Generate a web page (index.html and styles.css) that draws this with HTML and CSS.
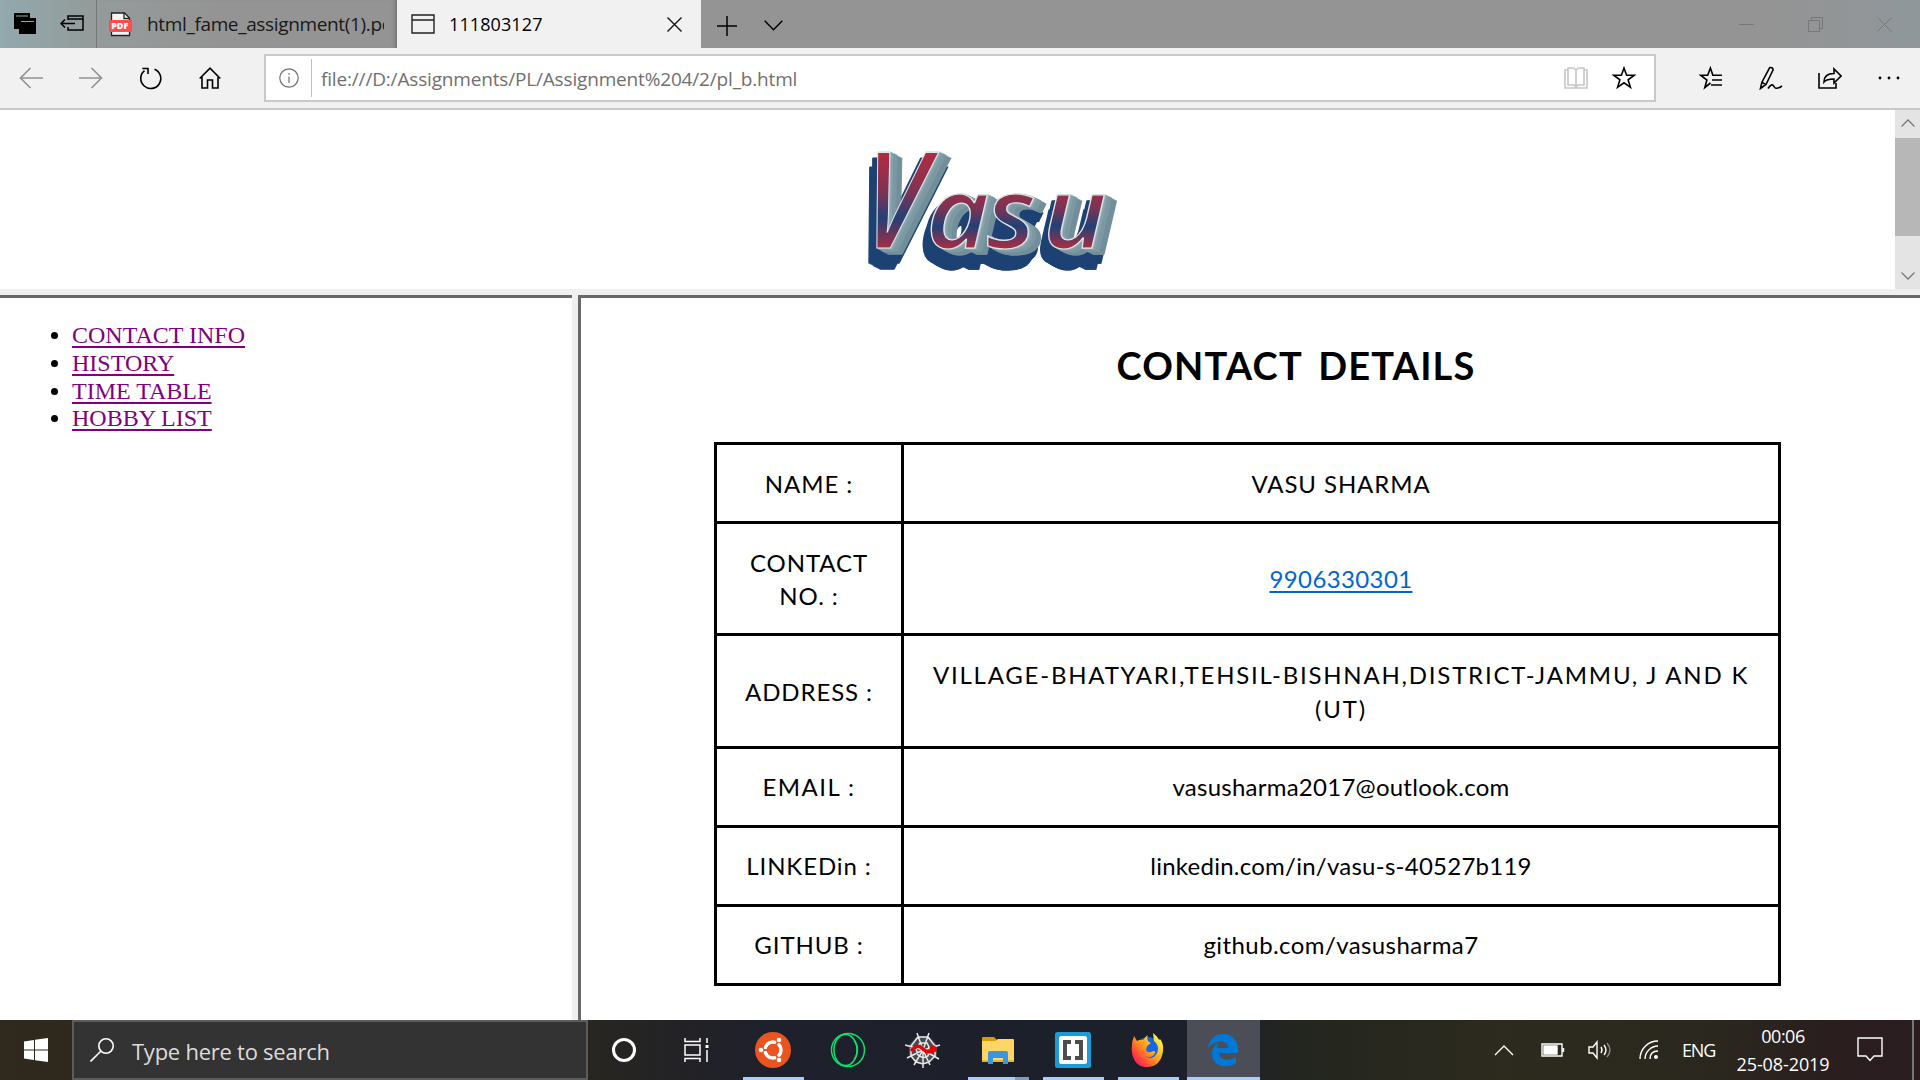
FILE: index.html
```html
<!DOCTYPE html>
<html lang="en">
<head>
<meta charset="utf-8">
<title>111803127</title>
<link rel="stylesheet" href="styles.css">
</head>
<body>
<div class="screen">
  <header class="tabbar">
    <div class="tab-tools">
      <svg width="22" height="22" viewBox="0 0 22 22"><path d="M0 0h16v5h6v16H5v-5H0z"/><path d="M2 3h12M7 8.500h13" stroke="#9aa9ad" stroke-width="1.200"/></svg>
      <svg width="24" height="18" viewBox="0 0 24 18" fill="none" stroke="#000" stroke-width="1.500"><path d="M8 5V1h15v14H8v-3M8 4h15M1 8.500h14M5 4.500L1 8.500l4 4"/></svg>
    </div>
    <div class="tab">
      <svg width="24" height="25" viewBox="0 0 24 25"><path d="M2.500 1h13l5 5v17.500h-18z" fill="#f7f7f7" stroke="#222" stroke-width="1.300"/><path d="M15 1v5.500h5.500" fill="none" stroke="#222" stroke-width="1.300"/><rect y="8" width="23" height="12" fill="#ff4d4d"/><text x="2.200" y="17" class="pdf-mark">PDF</text></svg>
      <span class="tab-title">html_fame_assignment(1).pdf</span>
    </div>
    <div class="tab tab-active">
      <svg width="24" height="20" viewBox="0 0 24 20" fill="none" stroke="#222" stroke-width="1.400"><path d="M1 1h22v18H1zM1 6h22"/></svg>
      <span class="tab-title active-title">111803127</span>
      <svg width="15" height="15" viewBox="0 0 15 15" fill="none" stroke="#111" stroke-width="1.400"><path d="M.5.500l14 14M14.500.5l-14 14"/></svg>
    </div>
    <div class="tab-actions">
      <svg width="20" height="20" viewBox="0 0 20 20" fill="none" stroke="#000" stroke-width="1.500"><path d="M10 0v20M0 10h20"/></svg>
      <svg width="19" height="11" viewBox="0 0 19 11" fill="none" stroke="#000" stroke-width="1.500"><path d="M.7.700l8.800 9 8.800-9"/></svg>
    </div>
    <div class="window-buttons">
      <svg width="15" height="15" viewBox="0 0 15 15"><path d="M0 7.500h15"/></svg>
      <svg width="15" height="15" viewBox="0 0 15 15"><path d="M.5 3.500h11v11H.500zM3.500 3V.500h11v11H12"/></svg>
      <svg width="15" height="15" viewBox="0 0 15 15"><path d="M.5.500l14 14M14.500.5l-14 14"/></svg>
    </div>
  </header>

  <div class="toolbar">
    <div class="nav-buttons">
      <svg class="muted" width="24" height="22" viewBox="0 0 24 22"><path d="M24 11H1M11.500 1L1.500 11l10 10"/></svg>
      <svg class="muted" width="24" height="22" viewBox="0 0 24 22"><path d="M0 11h23M12.500 1l10 10-10 10"/></svg>
      <svg width="24" height="24" viewBox="0 0 24 24"><path d="M15.500 3.200A10 10 0 1 1 5.500 4.700M3.300 2.500H9V8"/></svg>
      <svg width="22" height="22" viewBox="0 0 22 22"><path d="M.7 11.500L11 1.200l10.300 10.300M3 10v11h5.500v-8h5v8H19V10"/></svg>
    </div>
    <div class="address">
      <svg class="info" width="20" height="20" viewBox="0 0 20 20"><circle cx="10" cy="10" r="9.200"/><path d="M10 8.500V15M10 5v1.800"/></svg>
      <span class="url">file:///D:/Assignments/PL/Assignment%204/2/pl_b.html</span>
      <svg class="book" width="24" height="22" viewBox="0 0 24 22"><path d="M4 3H1v18h22V3h-3M12 3v17M4 1h6l2 2 2-2h6v17h-6l-2 2-2-2H4z"/></svg>
      <svg width="24" height="24" viewBox="0 0 24 24"><path d="M12 2l2.600 7.200h7.700l-6.200 4.600 2.300 7.500L12 16.800l-6.400 4.500 2.300-7.500-6.200-4.600h7.700z"/></svg>
    </div>
    <div class="tool-actions">
      <svg width="24" height="24" viewBox="0 0 24 24"><path d="M11.500 17l-5.700 4.500 2.100-7.500-6.200-4.800h7L11.400 2l2.500 7.200H23M13 14h10M12 19h11"/></svg>
      <svg width="24" height="24" viewBox="0 0 24 24"><path d="M1.500 22.500l1.300-6L10 2.800q1-2 2.800-1t1 2.700L7 18.500zM3 16.500L7 18.500M9 22.500c3-5 5-4 6-2s2.500 3 8-.5"/></svg>
      <svg width="24" height="22" viewBox="0 0 24 22"><path d="M1 6v15h17v-5M6 15c0-6 4-8.500 10-8.500V2l7 7-7 7v-4c-5 0-8 .5-10 3z"/></svg>
      <svg width="22" height="4" viewBox="0 0 22 4"><g class="dots"><circle cx="2" cy="2" r="1.400"/><circle cx="11" cy="2" r="1.400"/><circle cx="20" cy="2" r="1.400"/></g></svg>
    </div>
  </div>

  <section class="banner">
    <div class="banner-page">
      <svg class="wordmark" width="290" height="150" viewBox="0 0 290 150">
        <defs>
          <linearGradient id="face" x1="0" y1="0" x2="0" y2="1">
            <stop offset="0.200" stop-color="#c1293b"/><stop offset="0.480" stop-color="#7d3354"/><stop offset="0.620" stop-color="#234076"/><stop offset="0.800" stop-color="#b52b3e"/>
          </linearGradient>
        </defs>
        <g class="wordmark-text">
          <text class="wordmark-cap" y="108" transform="translate(10 0) skewX(-5) scale(0.800 1)">V</text>
          <text y="108" transform="scale(1.120 1)" x="60 114 164">asu</text>
        </g>
      </svg>
    </div>
    <div class="scrollbar">
      <svg width="14" height="8" viewBox="0 0 14 8"><path d="M.5 7.500L7 1l6.500 6.500"/></svg>
      <div class="thumb"></div>
      <svg width="14" height="8" viewBox="0 0 14 8"><path d="M.5.500L7 7 13.500.500"/></svg>
    </div>
  </section>

  <main class="frames">
    <nav class="menu-frame">
      <ul class="menu">
        <li><a>CONTACT INFO</a></li>
        <li><a>HISTORY</a></li>
        <li><a>TIME TABLE</a></li>
        <li><a>HOBBY LIST</a></li>
      </ul>
    </nav>
    <div class="divider"></div>
    <section class="content-frame">
      <h1 class="heading">CONTACT DETAILS</h1>
      <table class="details">
        <tr class="row"><td class="key">NAME :</td><td><span class="caps">VASU SHARMA</span></td></tr>
        <tr class="row row-tall"><td class="key">CONTACT<br>NO. :</td><td><a class="phone">9906330301</a></td></tr>
        <tr class="row row-taller"><td class="key">ADDRESS :</td><td><span class="address-text">VILLAGE-BHATYARI,TEHSIL-BISHNAH,DISTRICT-JAMMU, J AND K<br>(UT)</span></td></tr>
        <tr class="row row-online"><td class="key key-email">EMAIL :</td><td>vasusharma2017@outlook.com</td></tr>
        <tr class="row row-online"><td class="key">LINKEDin :</td><td>linkedin.com/in/vasu-s-40527b119</td></tr>
        <tr class="row row-online"><td class="key">GITHUB :</td><td><span class="host">github.com/vasusharma7</span></td></tr>
      </table>
    </section>
  </main>

  <footer class="taskbar">
    <div class="start"><svg width="24" height="24" viewBox="0 0 24 24" fill="#fff"><path d="M0 3.400L10 2v9.500H0zM11 1.800L24 0v11.500H11zM0 12.500h10V22L0 20.600zM11 12.500h13V24l-13-1.800z"/></svg></div>
    <div class="search">
      <svg width="24" height="24" viewBox="0 0 24 24" fill="none" stroke="#fff" stroke-width="1.600"><circle cx="16" cy="8" r="7.200"/><path d="M11 13L.5 23.500"/></svg>
      <span>Type here to search</span>
    </div>
    <div class="apps">
      <div class="app"><svg width="26" height="26" viewBox="0 0 26 26"><circle cx="13" cy="13" r="10.500" fill="none" stroke="#fff" stroke-width="3"/></svg></div>
      <div class="app task-view"><svg width="26" height="24" viewBox="0 0 26 24" fill="none" stroke="#fff" stroke-width="1.500"><path d="M1 0v3.500h15V0M1 24v-3.500h15V24M1 7h15v10H1zM23 0v5M23 12v12"/><path d="M21.500 7h3v3h-3z" fill="#fff" stroke="none"/></svg></div>
      <div class="app running"><svg width="36" height="36" viewBox="0 0 36 36"><circle cx="18" cy="18" r="18" fill="#e95420"/><circle cx="18" cy="18" r="8" fill="none" stroke="#fff" stroke-width="3.500"/><path d="M18 18L5 18M18 18l6-10.500M18 18l6 10.500" stroke="#e95420" stroke-width="1.800"/><circle cx="18" cy="18" r="6" fill="#e95420"/><g fill="#fff" stroke="#e95420" stroke-width="1"><circle cx="6" cy="18" r="2.800"/><circle cx="24" cy="8" r="2.800"/><circle cx="24" cy="28" r="2.800"/></g></svg></div>
      <div class="app"><svg width="36" height="36" viewBox="0 0 36 36" fill="none" stroke="#0ee06e" stroke-width="1.500"><circle cx="18" cy="18" r="16.500"/><ellipse cx="15.500" cy="18" rx="11.500" ry="15.500"/><path d="M24 9c4.500 4 4.500 14 0 18"/></svg></div>
      <div class="app"><svg width="36" height="36" viewBox="0 0 36 36"><path d="M12 4l12 0 8 9 0 10-7 6-7 3-8-3-6-6 0-10z" fill="#484b50"/><path d="M18 18L12 1M18 18L24 1M18 18L35 13M18 18l16 9M18 18l7 15M18 18v18M18 18L9 33M18 18L2 26M18 18L0 13M13 5h10l7 9 0 10-6 6-6 2-7-2-5-6V14zM15 11h7l3 6-2 7-5 2-5-3-2-6z" fill="none" stroke="#e8e8e8" stroke-width="1.500"/><path d="M6 19c6-6 8-6 12-2s8 4 10-1" fill="none" stroke="#e90000" stroke-width="3.500"/><circle cx="28" cy="17" r="3.500" fill="#e90000"/></svg></div>
      <div class="app running grouped"><svg width="32" height="27" viewBox="0 0 32 27"><path d="M0 1q0-1 1-1h11l3 3-3 4H0z" fill="#d99a00"/><path d="M0 4h13l3-2h15q1 0 1 1v22H0z" fill="#ffd666"/><path d="M0 23h32v2H0z" fill="#e8b53c"/><path d="M6 27V16q0-2 2-2h16q2 0 2 2v11h-5v-6H11v6z" fill="#3a96dd"/></svg></div>
      <div class="app running"><svg width="36" height="36" viewBox="0 0 36 36"><rect width="36" height="36" rx="2.500" fill="#1d9bd6"/><rect x="4" y="4" width="28" height="28" rx="2.500" fill="#fff"/><path d="M8 8h8v4h-4v12h4v4H8zM28 8h-8v4h4v12h-4v4h8z" fill="#4d4d4d"/></svg></div>
      <div class="app running"><svg width="34" height="34" viewBox="0 0 34 34"><defs><linearGradient id="fox" x1="1" y1="0" x2="0" y2="1"><stop offset=".15" stop-color="#fff04a"/><stop offset=".5" stop-color="#ff9a1a"/><stop offset=".8" stop-color="#ff3147"/><stop offset="1" stop-color="#e31587"/></linearGradient></defs><circle cx="17" cy="16" r="12" fill="#1466e8"/><path d="M3 3l3 5q3-2 6-1 3-4 5-5-2 4 1 7l2 1-4 3-1 4q2 4 7 1 3 0 2 2-3 6-10 3 8 5 12-3 3-7-3-12l-1-8q5 4 6 7l1-1q4 5 3 12-2 15-15 16T1 20Q0 10 3 3z" fill="url(#fox)"/></svg></div>
      <div class="app running current"><svg width="32" height="34" viewBox="0 0 32 34"><path d="M1 15C3 5 9 1 16 1c10 0 15 7 15 16v3H12c0 7 10 9 17 4v6c-9 6-24 4-24-9 0-6 3-9 7-11-1 1-2 3-2 5h11c0-8-12-9-20 0z" fill="#0078d7"/></svg></div>
    </div>
    <div class="tray">
      <svg width="20" height="12" viewBox="0 0 20 12"><path d="M1 11l9-9 9 9"/></svg>
      <svg width="24" height="14" viewBox="0 0 24 14"><path d="M1 1h20v12H1zM22.500 5v4"/><path d="M3 3h13v8H3z" fill="#fff"/></svg>
      <svg width="24" height="20" viewBox="0 0 24 20"><path d="M1 7h4l4-5v16l-4-5H1zM13 7q2 3 0 6M16 5q4 5 0 10"/><path d="M19 3q6 7 0 14" opacity=".45"/></svg>
      <svg width="20" height="20" viewBox="0 0 20 20"><path d="M1 19C1 9 9 1 19 1M6 19C6 12 12 6 19 6M11 19c0-5 3-8 8-8"/><circle cx="17" cy="17" r="1.300" fill="#fff"/></svg>
      <span class="lang">ENG</span>
      <div class="clock"><span class="time">00:06</span><span>25-08-2019</span></div>
      <svg width="26" height="26" viewBox="0 0 26 26"><path d="M1 1h24v18h-8l-4 4.500L9 19H1z"/></svg>
      <div class="show-desktop"></div>
    </div>
  </footer>
</div>
</body>
</html>
```
FILE: styles.css
```css
* { box-sizing: border-box; }
body { margin: 0; font-family: "Open Sans", sans-serif; color: #000; background: #fff; }
svg { display: block; flex: none; }
.screen { width: 1920px; height: 1080px; display: flex; flex-direction: column; overflow: hidden; }

/* Tab strip */
.tabbar { height: 48px; flex: none; display: flex; align-items: stretch; background: linear-gradient(90deg, #92a9ae 0, #949b9b 90px, #949494 220px, #949494 1780px, #8f979b 1920px); }
.tab-tools { width: 97px; display: flex; align-items: center; gap: 24px; padding-left: 14px; border-right: 1px solid #777; }
.tab { width: 300px; display: flex; align-items: center; padding: 0 13px 0 12px; }
.tab-title { margin-left: 14px; flex: 1; overflow: hidden; white-space: nowrap; font-size: 19px; letter-spacing: -0.350px; }
.tab:not(.tab-active) { box-shadow: inset -5px 0 5px -4px #666; }
.tab:not(.tab-active) .tab-title { color: #191919; }
.pdf-mark { font: 800 9px "Open Sans", sans-serif; fill: #fff; }
.tab-active { width: 304px; padding: 0 19px 0 14px; background: #f1f1f1; }
.active-title { font-size: 18px; letter-spacing: 0.100px; }
.tab-actions { display: flex; align-items: center; gap: 27px; padding: 3px 0 0 16px; }
.window-buttons { margin-left: auto; display: flex; align-items: center; gap: 54px; padding-right: 28px; fill: none; stroke: #777; }

/* Toolbar */
.toolbar { height: 62px; flex: none; display: flex; align-items: center; background: #f1f1f1; border-bottom: 2px solid #c9c9c9; fill: none; stroke: #000; stroke-width: 1.600; }
.nav-buttons { width: 264px; display: flex; align-items: center; gap: 36px; padding-left: 19px; }
.muted { stroke: #929292; }
.address { width: 1392px; height: 48px; display: flex; align-items: center; padding: 0 18px 0 13px; background: #fff; border: 2px solid #c9c9c9; }
.info { stroke: #6f6f6f; stroke-width: 1.200; }
.url { height: 38px; margin-left: 12px; padding-left: 9px; flex: 1; border-left: 1px solid #c0c0c0; font-size: 19px; line-height: 40px; letter-spacing: -0.170px; color: #707070; }
.book { stroke: #c6c6c6; margin-right: 24px; }
.tool-actions { display: flex; align-items: center; gap: 35.500px; padding-left: 43px; }
.dots { fill: #000; stroke: none; }

/* Banner frame */
.banner { height: 188px; flex: none; display: flex; border-bottom: 3px solid #686a69; }
.banner-page { flex: 1; display: flex; padding: 30px 0 0 859px; border-bottom: 6px solid #efefef; }
.wordmark { overflow: visible; }
.wordmark-text { font: italic 600 97px "Open Sans", sans-serif; fill: url(#face); stroke: #dfe5e8; stroke-width: 1.200; filter: drop-shadow(1px 0.500px 0 #9db4bb) drop-shadow(2px 1px 0 #86a2ab) drop-shadow(4px 2px 0 #7c98a2) drop-shadow(5px 3px 0 #718f9b) drop-shadow(-5px 6px 0 #1d4173) drop-shadow(-3px 9px 0 #1d4173); }
.wordmark-cap { font-size: 134px; }
.scrollbar { width: 25px; display: flex; flex-direction: column; align-items: center; padding: 9px 0; background: #e4e4e4; border-bottom: 6px solid #efefef; fill: none; stroke: #777; stroke-width: 1.300; }
.thumb { width: 25px; height: 98px; margin: 11px 0 auto; background: #b7b7b7; }

/* Frames */
.frames { flex: 1; display: flex; min-height: 0; }
.menu-frame { width: 572px; }
.divider { width: 9px; margin-top: -3px; background: #efefef; border-right: 3px solid #686a69; }
.menu { margin: 24px 0 0; padding-left: 72px; font: 24px/27.800px "Liberation Serif", serif; }
.menu a { color: #800080; text-decoration: underline; text-decoration-thickness: 2px; text-underline-offset: 3px; }
.content-frame { flex: 1; padding-left: 133px; font-family: "Comic Sans MS", Lato, sans-serif; }
.heading { margin: 41px 0 0; width: 1164px; text-align: center; font-size: 38px; line-height: 52px; font-weight: 700; letter-spacing: 1.180px; word-spacing: 6px; }
.details { width: 1067px; margin-top: 51px; border-collapse: collapse; table-layout: fixed; font-size: 24px; line-height: 33.500px; text-align: center; letter-spacing: 0.250px; }
.details td { padding: 1px 0 0; border: 3px solid #000; }
.details .row-online td { padding: 0; }
.key { width: 187px; letter-spacing: 0.900px; }
.key-email { letter-spacing: 1.450px; }
.row { height: 79px; }
.row-tall { height: 112px; }
.row-taller { height: 113px; }
.caps { letter-spacing: 0.900px; }
.address-text { letter-spacing: 1.780px; }
.host { letter-spacing: 0.410px; }
.phone { color: #0066cc; letter-spacing: 0.380px; text-decoration: underline; text-decoration-thickness: 2px; text-underline-offset: 3px; }

/* Taskbar */
.taskbar { height: 60px; flex: none; display: flex; color: #fff; background: linear-gradient(90deg, #30291d 0, #292620 580px, #1e202b 760px, #1c202a 1200px, #23261f 1300px, #2d2a1e 1500px, #2a271e 1720px, #2a1e1f 1840px, #2a1d20 1920px); }
.start { width: 72px; display: flex; align-items: center; justify-content: center; }
.search { width: 516px; display: flex; align-items: center; gap: 18px; padding-left: 16px; font-size: 22px; letter-spacing: -0.250px; color: #dcdcdc; background: #333; border: 2px solid #5c5c5c; }
.search span { padding-top: 2px; }
.search svg { margin-bottom: 1px; }
.apps { display: flex; margin-left: -2px; }
.app { width: 75px; display: flex; align-items: center; justify-content: center; position: relative; }
.task-view { width: 74px; padding-right: 3px; }
.running::after { content: ""; position: absolute; left: 8px; bottom: 0; width: 61px; height: 3px; background: #a9cbff; }
.grouped::after { background: linear-gradient(90deg, #a9cbff 47px, #8398c2 47px); }
.current { background: #4b4e56; width: 73px; margin-left: 2px; padding-right: 2px; }
.current::after { left: 0; width: 73px; }
.tray { margin-left: auto; display: flex; align-items: center; fill: none; stroke: #fff; stroke-width: 1.400; font-size: 18px; }
.tray > svg + svg { margin-left: 27px; }
.tray > svg:nth-child(3) { margin-left: 23px; }
.tray > svg:nth-child(4) { margin-left: 27px; }
.lang { width: 34px; margin-left: 23px; letter-spacing: -1.200px; font-size: 18px; }
.clock { width: 94px; margin: 0 27px 0 20px; text-align: center; line-height: 28px; letter-spacing: -0.090px; white-space: nowrap; display: flex; flex-direction: column; }
.time { letter-spacing: -0.500px; }
.show-desktop { height: 60px; width: 8px; margin-left: 29px; border-left: 2px solid #777; }
```
